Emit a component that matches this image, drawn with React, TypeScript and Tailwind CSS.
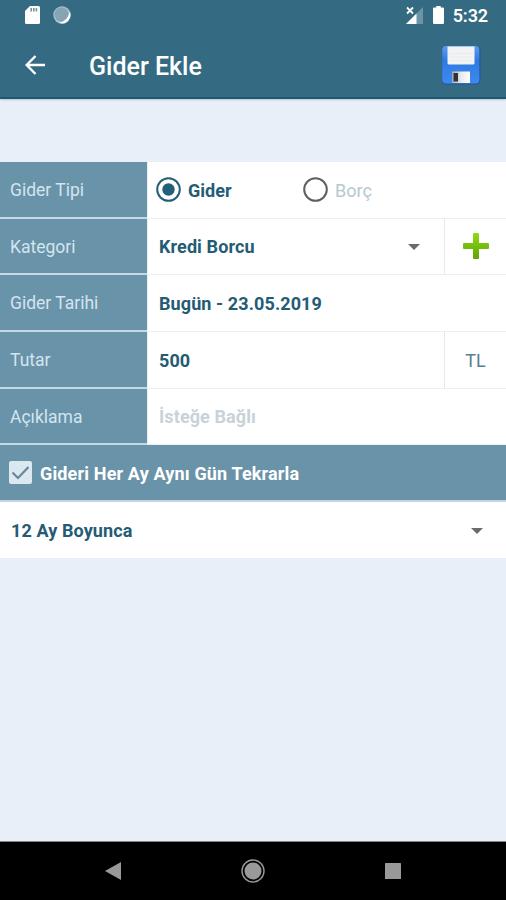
import { useState } from "react";
import type { ReactNode } from "react";

function StatusBar() {
  return (
    <div className="flex h-8 items-center justify-between pl-[25px] pr-[18px] pb-[2px]">
      <div className="flex items-center gap-[13px]">
        <svg width="15" height="18" viewBox="0 0 15 18">
          <path d="M5 0H13.5Q15 0 15 1.5V16.5Q15 18 13.5 18H1.5Q0 18 0 16.5V5Z" fill="#fff" />
          <path d="M6.200 2v3.500M8.800 2v3.500M11.400 2v3.500" stroke="#6f97a8" strokeWidth="1.600" />
        </svg>
        <svg width="18" height="18" viewBox="0 0 18 18">
          <circle cx="9" cy="9" r="8.7" fill="#a9c0cb" />
          <circle cx="8.5" cy="8.5" r="7" fill="#85a5b4" />
          <path d="M16.800 6A8.300 8.300 0 0 1 6 16.800Q14.500 15.500 16.800 6Z" fill="#fff" />
        </svg>
      </div>
      <div className="flex items-center">
        <svg width="17" height="18" viewBox="0 0 17 18">
          <path d="M17 1V18H0Z" fill="#6d94a5" />
          <path d="M10.500 7.500V18H0Z" fill="#fff" />
          <path d="M0 0H8V9H0Z" fill="#346b82" />
          <path d="M1 1.500L7 7.500M7 1.500L1 7.500" stroke="#fff" strokeWidth="1.800" />
        </svg>
        <svg className="ml-[10px]" width="11" height="18" viewBox="0 0 11 18">
          <path d="M3.300 0H7.700V1.500H9.800Q11 1.500 11 2.700V16.800Q11 18 9.800 18H1.200Q0 18 0 16.800V2.700Q0 1.500 1.200 1.500H3.300Z" fill="#fff" />
        </svg>
        <span className="ml-[9px] pt-[2px] text-[18px] leading-none font-semibold tracking-[-0.1px]">5:32</span>
      </div>
    </div>
  );
}

function SaveIcon() {
  return (
    <svg width="40" height="40" viewBox="0 0 40 40">
      <defs>
        <linearGradient id="disk" x1="0" y1="0" x2="0" y2="1">
          <stop offset="0" stopColor="#5b9cf2" />
          <stop offset="0.4" stopColor="#2f7ae0" />
          <stop offset="1" stopColor="#3c8bf2" />
        </linearGradient>
        <linearGradient id="shutter" x1="0" y1="0" x2="1" y2="0">
          <stop offset="0" stopColor="#a8aaa8" />
          <stop offset="0.5" stopColor="#e8eaec" />
          <stop offset="1" stopColor="#fff" />
        </linearGradient>
      </defs>
      <rect x="1" y="1" width="38.5" height="38.5" rx="4.5" fill="#245394" />
      <rect x="1.2" y="1" width="37.2" height="37.5" rx="4" fill="url(#disk)" />
      <path d="M6.500 1.500H33.500V18Q33.500 19.500 32 19.500H8Q6.500 19.500 6.500 18Z" fill="#f2f3f4" />
      <path d="M9 8.500H31M9 12H31M9 15.500H31" stroke="#e9ebec" strokeWidth="1" />
      <rect x="11" y="26.500" width="18" height="11.500" fill="url(#shutter)" />
      <rect x="12.500" y="28" width="4.500" height="8.500" fill="#303333" />
    </svg>
  );
}

function Caret() {
  return (
    <svg width="12" height="6" viewBox="0 0 12 6">
      <path d="M0 0H12L6 6Z" fill="#6b6b6b" />
    </svg>
  );
}

function Row({ label, size, children }: { label: string; size: string; children: ReactNode }) {
  return (
    <div className={`flex ${size}`}>
      <div className="flex w-[147px] items-center border-b-2 border-[#c3d9e5] bg-[#6993a8] pl-[10px] pt-[3px] text-[17.5px] text-[#d3e5ef]">
        {label}
      </div>
      <div className="flex flex-1 border-b border-l border-[#e9f0f5] bg-white text-[#245b75]">{children}</div>
    </div>
  );
}

export default function App() {
  const [type, setType] = useState("gider");
  const [repeat, setRepeat] = useState(true);

  return (
    <div className="flex h-[900px] w-[506px] flex-col overflow-hidden bg-[#e9eff8] font-['Roboto',sans-serif] text-[18px] leading-none">
      <header className="h-[99px] shrink-0 border-b-2 border-[#1c5873] bg-[#346b82] text-white shadow-[0_1px_2px_#b9c4cc]">
        <StatusBar />
        <div className="flex h-[66px] items-center pl-[25px] pr-[25px]">
          <svg width="20" height="20" viewBox="0 0 20 20" fill="none" stroke="#fff" strokeWidth="2.4">
            <path d="M20 10H2M10.500 1L1.700 10L10.500 19" />
          </svg>
          <h1 className="ml-[44px] flex-1 pt-[2px] text-[25px] font-medium">Gider Ekle</h1>
          <button>
            <SaveIcon />
          </button>
        </div>
      </header>

      <main className="flex-1 pt-[63px]">
        <Row label="Gider Tipi" size="h-[57px]">
          <button onClick={() => setType("gider")} className="flex w-[146px] items-center pb-px pl-[8px] font-bold">
            <Radio checked={type === "gider"} />
            <span className="ml-[7px] pt-[2px]">Gider</span>
          </button>
          <button onClick={() => setType("borc")} className="flex items-center pb-px pl-[9px] text-[#b5c9d2]">
            <Radio checked={type === "borc"} />
            <span className="ml-[7px] pt-[2px]">Borç</span>
          </button>
        </Row>

        <Row label="Kategori" size="h-[56px]">
          <div className="flex flex-1 items-center justify-between pl-[11px] pr-[24px] font-bold tracking-[0.1px]">
            Kredi Borcu
            <Caret />
          </div>
          <button className="flex w-[62px] items-center justify-center border-l border-[#e1eaef] pb-px">
            <svg width="26" height="26" viewBox="0 0 26 26">
              <defs>
                <linearGradient id="plus" x1="0" y1="0" x2="0" y2="1">
                  <stop offset="0" stopColor="#8fd91c" />
                  <stop offset="1" stopColor="#5fa500" />
                </linearGradient>
              </defs>
              <path
                d="M11 0H15Q16 0 16 1V10H25Q26 10 26 11V15Q26 16 25 16H16V25Q16 26 15 26H11Q10 26 10 25V16H1Q0 16 0 15V11Q0 10 1 10H10V1Q10 0 11 0Z"
                fill="url(#plus)"
              />
            </svg>
          </button>
        </Row>

        <Row label="Gider Tarihi" size="h-[57px]">
          <div className="flex items-center pl-[11px] pt-px font-bold tracking-[0.1px]">Bugün - 23.05.2019</div>
        </Row>

        <Row label="Tutar" size="h-[57px]">
          <div className="flex flex-1 items-center pl-[11px] pt-px font-bold tracking-[0.1px]">500</div>
          <div className="flex w-[62px] items-center justify-center border-l border-[#e1eaef] pt-px text-[#56808f]">TL</div>
        </Row>

        <Row label="Açıklama" size="h-[56px]">
          <div className="flex items-center pl-[11px] pt-px font-bold tracking-[0.1px] text-[#c8d2d9]">İsteğe Bağlı</div>
        </Row>

        <button
          onClick={() => setRepeat(!repeat)}
          className="flex h-[57px] w-full items-center border-b-2 border-[#c3d3df] bg-[#6993a8] pl-[9px] font-bold tracking-[0.15px] text-white"
        >
          <svg width="23" height="23" viewBox="0 0 23 23">
            <rect width="23" height="23" rx="2" fill="#dce8f0" />
            {repeat && <path d="M3.500 11.500L9 17L19.500 6" fill="none" stroke="#64899b" strokeWidth="2.2" />}
          </svg>
          <span className="ml-[8px] pt-[2px]">Gideri Her Ay Aynı Gün Tekrarla</span>
        </button>

        <div className="flex h-[56px] items-center justify-between bg-white pl-[11px] pr-[23px] pt-[2px] font-bold tracking-[0.1px] text-[#245b75]">
          12 Ay Boyunca
          <Caret />
        </div>
      </main>

      <nav className="flex h-[59px] shrink-0 items-center justify-between border-t border-[#7d8588] bg-black pl-[105px] pr-[105px]">
        <svg width="16" height="18" viewBox="0 0 16 18">
          <path d="M16 0V18L0 9Z" fill="#999" />
        </svg>
        <svg width="24" height="24" viewBox="0 0 24 24">
          <circle cx="12" cy="12" r="11" fill="none" stroke="#999" strokeWidth="1.400" />
          <circle cx="12" cy="12" r="8.500" fill="#999" />
        </svg>
        <svg width="16" height="16" viewBox="0 0 16 16">
          <rect width="16" height="16" rx="0.500" fill="#999" />
        </svg>
      </nav>
    </div>
  );
}

function Radio({ checked }: { checked: boolean }) {
  const color = checked ? "#245f79" : "#5f5f5f";
  return (
    <svg width="25" height="25" viewBox="0 0 25 25">
      <circle cx="12.500" cy="12.500" r="11.300" fill="none" stroke={color} strokeWidth="2" />
      {checked && <circle cx="12.500" cy="12.500" r="6.200" fill={color} />}
    </svg>
  );
}
